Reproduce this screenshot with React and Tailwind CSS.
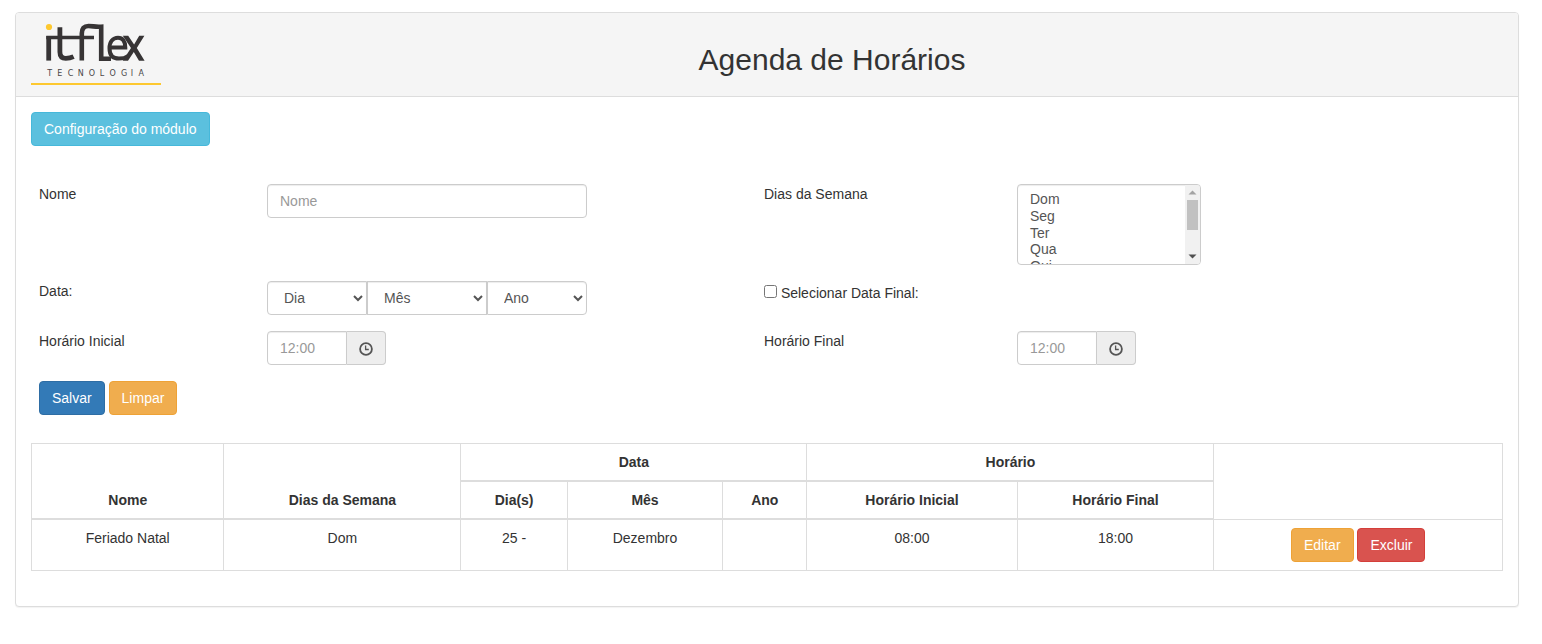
import React from 'react';

const DAYS = ['Dom', 'Seg', 'Ter', 'Qua', 'Qui', 'Sex', 'Sab'];
const MONTHS = [
  'Janeiro', 'Fevereiro', 'Março', 'Abril', 'Maio', 'Junho',
  'Julho', 'Agosto', 'Setembro', 'Outubro', 'Novembro', 'Dezembro',
];
const YEARS = ['2018', '2019', '2020'];

const SCHEDULES = [
  {
    name: 'Feriado Natal',
    weekDays: 'Dom',
    days: '25 -',
    month: 'Dezembro',
    year: '',
    start: '08:00',
    end: '18:00',
  },
];

const BUTTON = 'inline-block rounded-[4px] border px-3 py-1.5 text-white cursor-pointer';
const VARIANTS = {
  info: 'bg-[#5bc0de] border-[#46b8da]',
  primary: 'bg-[#337ab7] border-[#2e6da4]',
  warning: 'bg-[#f0ad4e] border-[#eea236]',
  danger: 'bg-[#d9534f] border-[#d43f3a]',
};
const CONTROL =
  'border border-[#ccc] bg-white text-[#555] shadow-[inset_0_1px_1px_rgba(0,0,0,0.075)] placeholder:text-[#999]';

function Button({ variant, children }) {
  return (
    <button type="button" className={`${BUTTON} ${VARIANTS[variant]}`}>
      {children}
    </button>
  );
}

function Logo() {
  return (
    <svg width="130" height="63" viewBox="0 0 130 63" className="shrink-0" role="img" aria-label="itflex Tecnologia">
      <circle cx="18" cy="4" r="3.1" fill="#fdc82f" />
      <g fill="none" stroke="#373435" strokeWidth="4.8">
        <path d="M17.7 37.6V13" />
        <path d="M15.3 14.5H63" strokeWidth="3.4" />
        <path d="M28.9 4.2V29Q28.9 35.3 34.8 35.3Q39 35.3 42.6 33.6" />
        <path d="M50.8 37.6V10.5C50.8 5.5 53 3 57.5 3C62 3 64.5 4.2 70.2 3.7V35.8H80" strokeWidth="4.6" />
        <path d="M79 24.6H94.3C94.3 18 91.6 14.7 87 14.7C82 14.7 78.5 18.8 78.5 25.2C78.5 32 82 35.6 88 35.6Q93.5 35.6 97 33" strokeWidth="4" />
      </g>
      <path
        fill="#373435"
        d="M91.8 12.7H97.2L103.1 21.4L108.2 12.7H113.4L105.8 25L113.6 37.7H108L102.8 28.9L97 37.7H91.7L100 25Z"
      />
      <text
        x="18.7 28.8 39.5 49.8 60.8 71 81.7 93 101 110.3"
        y="53"
        textAnchor="middle"
        fill="#4a4748"
        className="font-['DejaVu_Sans',sans-serif] text-[8px]"
      >
        TECNOLOGIA
      </text>
      <rect x="0" y="60" width="130" height="2" fill="#fdc82f" />
    </svg>
  );
}

function ClockIcon() {
  return (
    <svg width="14" height="14" viewBox="0 0 14 14" fill="none" stroke="#555" aria-hidden="true">
      <circle cx="7" cy="7" r="5.9" strokeWidth="1.8" />
      <path d="M6.6 3.5V7.5H9.8" strokeWidth="1.3" />
    </svg>
  );
}

function ScrollBar() {
  return (
    <span
      className="pointer-events-none absolute inset-y-px right-px flex w-[15px] flex-col items-center rounded-r-[3px] bg-[#f1f1f1]"
      aria-hidden="true"
    >
      <svg width="15" height="15" viewBox="0 0 15 15">
        <path d="M7.5 5.5L11.5 9.5H3.5Z" fill="#a3a3a3" />
      </svg>
      <span className="h-[30px] w-[11px] bg-[#c1c1c1]" />
      <svg width="15" height="15" viewBox="0 0 15 15" className="mt-auto">
        <path d="M3.5 5.5H11.5L7.5 9.5Z" fill="#505050" />
      </svg>
    </span>
  );
}

function Cell({ children }) {
  return <div className="p-2">{children}</div>;
}

function DateSelect({ label, options, className }) {
  return (
    <select aria-label={label} defaultValue="" className={`h-[34px] px-3 py-1.5 ${CONTROL} ${className}`}>
      <option value="">{label}</option>
      {options.map((option) => (
        <option key={option}>{option}</option>
      ))}
    </select>
  );
}

function TimeField({ id }) {
  return (
    <div className="flex">
      <input
        id={id}
        type="text"
        placeholder="12:00"
        className={`h-[34px] w-20 rounded-l-[4px] px-3 py-1.5 ${CONTROL}`}
      />
      <span className="flex h-[34px] w-[39px] items-center justify-center rounded-r-[4px] border border-l-0 border-[#ccc] bg-[#eee] pt-0.5">
        <ClockIcon />
      </span>
    </div>
  );
}

function Heading({ children, ...props }) {
  return (
    <th className="border border-b-2 border-[#ddd] p-2 align-bottom font-bold" {...props}>
      {children}
    </th>
  );
}

function Data({ children }) {
  return <td className="border border-[#ddd] p-2 align-top">{children}</td>;
}

export default function App() {
  return (
    <main className="pt-3 pr-[23px] pb-5 pl-[15px] font-['Liberation_Sans',Arial,sans-serif] text-[14px] leading-5 text-[#333]">
      <section className="rounded-[4px] border border-[#ddd] bg-white shadow-[0_1px_1px_rgba(0,0,0,0.05)]">
        <header className="flex rounded-t-[3px] border-b border-[#ddd] bg-[#f5f5f5] px-[15px] py-2.5">
          <Logo />
          <h1 className="mt-5 grow text-center text-[30px] leading-[33px]">Agenda de Horários</h1>
        </header>

        <div className="p-[15px]">
          <Button variant="info">Configuração do módulo</Button>

          <form className="mt-[30px] grid grid-cols-[228fr_497fr_253fr_494fr]">
            <Cell>
              <label htmlFor="name">Nome</label>
            </Cell>
            <Cell>
              <input
                id="name"
                type="text"
                placeholder="Nome"
                className={`block h-[34px] w-80 rounded-[4px] px-3 py-1.5 ${CONTROL}`}
              />
            </Cell>
            <Cell>
              <label htmlFor="weekdays">Dias da Semana</label>
            </Cell>
            <Cell>
              <div className="relative w-[184px]">
                <select
                  id="weekdays"
                  multiple
                  size={4}
                  className={`block h-[81px] w-full rounded-[4px] px-3 py-1.5 ${CONTROL}`}
                >
                  {DAYS.map((day) => (
                    <option key={day} className="p-0">{day}</option>
                  ))}
                </select>
                <ScrollBar />
              </div>
            </Cell>

            <Cell>Data:</Cell>
            <Cell>
              <div className="flex">
                <DateSelect label="Dia" options={['1', '2', '3']} className="w-[100px] rounded-l-[4px]" />
                <DateSelect label="Mês" options={MONTHS} className="w-[120px]" />
                <DateSelect label="Ano" options={YEARS} className="w-[100px] rounded-r-[4px]" />
              </div>
            </Cell>
            <Cell>
              <label>
                <input type="checkbox" className="mt-1" /> Selecionar Data Final:
              </label>
            </Cell>
            <Cell />

            <Cell>
              <label htmlFor="start">Horário Inicial</label>
            </Cell>
            <Cell>
              <TimeField id="start" />
            </Cell>
            <Cell>
              <label htmlFor="end">Horário Final</label>
            </Cell>
            <Cell>
              <TimeField id="end" />
            </Cell>

            <Cell>
              <Button variant="primary">Salvar</Button> <Button variant="warning">Limpar</Button>
            </Cell>
          </form>

          <table className="my-5 w-full border-collapse border border-[#ddd] text-center">
            <thead>
              <tr>
                <Heading rowSpan={2}>Nome</Heading>
                <Heading rowSpan={2}>Dias da Semana</Heading>
                <Heading colSpan={3}>Data</Heading>
                <Heading colSpan={2}>Horário</Heading>
                <td rowSpan={2} className="border border-[#ddd] p-2" />
              </tr>
              <tr>
                <Heading>Dia(s)</Heading>
                <Heading>Mês</Heading>
                <Heading>Ano</Heading>
                <Heading>Horário Inicial</Heading>
                <Heading>Horário Final</Heading>
              </tr>
            </thead>
            <tbody>
              {SCHEDULES.map((item) => (
                <tr key={item.name}>
                  <Data>{item.name}</Data>
                  <Data>{item.weekDays}</Data>
                  <Data>{item.days}</Data>
                  <Data>{item.month}</Data>
                  <Data>{item.year}</Data>
                  <Data>{item.start}</Data>
                  <Data>{item.end}</Data>
                  <Data>
                    <Button variant="warning">Editar</Button> <Button variant="danger">Excluir</Button>
                  </Data>
                </tr>
              ))}
            </tbody>
          </table>
        </div>
      </section>
    </main>
  );
}
